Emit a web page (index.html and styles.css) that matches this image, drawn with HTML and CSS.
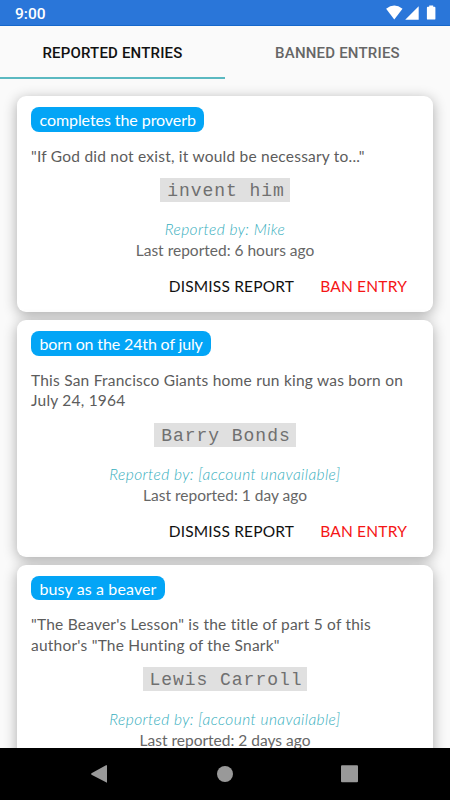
FILE: index.html
```
<!DOCTYPE html>
<html lang="en">
<head>
<meta charset="utf-8">
<title>Reported entries</title>
<link rel="stylesheet" href="styles.css">
</head>
<body>
<div class="screen">
  <header class="status">
    <span class="time">9:00</span>
    <svg class="status-icons" width="52" height="16" viewBox="0 0 52 16" fill="#fff">
      <path d="M2.100 3.700Q10.300-2.500 18.500 3.700L10.300 14.500Z"/>
      <path d="M34.700 1.200V14.700H21.200Z"/>
      <path d="M45.200 .400h4v1.400h1.300q.9 0 .9.9v11q0 .9-.9.9h-6.700q-.9 0-.9-.9V2.700q0-.9.9-.9h1.400z"/>
    </svg>
  </header>
  <nav class="tabs">
    <div class="tab active">REPORTED ENTRIES</div>
    <div class="tab">BANNED ENTRIES</div>
  </nav>
  <main class="list">
    <article class="card">
      <div class="tag tag-proverb">completes the proverb</div>
      <p class="question">"If God did not exist, it would be necessary to..."</p>
      <div class="answer">invent him</div>
      <div class="reporter">Reported by: Mike</div>
      <div class="when">Last reported: 6 hours ago</div>
      <div class="actions"><span class="dismiss">DISMISS REPORT</span><span class="ban">BAN ENTRY</span></div>
    </article>
    <article class="card">
      <div class="tag tag-july">born on the 24th of july</div>
      <p class="question">This San Francisco Giants home run king was born on<br>July 24, 1964</p>
      <div class="answer">Barry Bonds</div>
      <div class="reporter">Reported by: [account unavailable]</div>
      <div class="when">Last reported: 1 day ago</div>
      <div class="actions"><span class="dismiss">DISMISS REPORT</span><span class="ban">BAN ENTRY</span></div>
    </article>
    <article class="card">
      <div class="tag tag-beaver">busy as a beaver</div>
      <p class="question">"The Beaver's Lesson" is the title of part 5 of this<br>author's "The Hunting of the Snark"</p>
      <div class="answer">Lewis Carroll</div>
      <div class="reporter">Reported by: [account unavailable]</div>
      <div class="when">Last reported: 2 days ago</div>
    </article>
  </main>
  <footer class="navbar">
    <svg width="450" height="52" viewBox="0 0 450 52" fill="#999">
      <path d="M107 17.200V34.800L91.500 26.700Q90.700 26 91.500 25.300L106 17.200Z"/>
      <circle cx="225" cy="26" r="8"/>
      <rect x="341" y="17.200" width="17" height="17" rx="1"/>
    </svg>
  </footer>
</div>
</body>
</html>
```
FILE: styles.css
```
* { box-sizing: border-box; }
body { margin: 0; background: #fafafa; font-family: Lato, sans-serif; font-variant-ligatures: none; }
.screen { width: 450px; height: 800px; display: flex; flex-direction: column; overflow: hidden; }
.status {
  height: 26px; flex: none; background: #2a76d9; border-bottom: 1px solid #1567cb;
  display: flex; justify-content: space-between; padding: 5px 15px 0 15px;
  color: #fff; font: 500 15.5px/18px Roboto, sans-serif;
}
.status-icons { margin-right: -1px; }
.tabs { height: 53px; flex: none; display: flex; }
.tab {
  flex: 1; display: flex; justify-content: center; align-items: center; padding-top: 3px;
  font: 500 15px/20px Roboto, sans-serif; letter-spacing: .2px; color: #666;
  border-bottom: 2px solid transparent;
}
.active { color: #111; letter-spacing: .18px; border-color: #5bb9c1; }
.list {
  flex: 1; min-height: 0; overflow: hidden; padding: 17px 17px 0;
  display: flex; flex-direction: column; gap: 8.4px;
}
.card {
  flex: none; background: #fff; border-radius: 9px; padding: 11px 14px 14.7px;
  display: flex; flex-direction: column; color: #5c5c5c;
  font-size: 15.5px; line-height: 20.8px;
  box-shadow: 0 3px 14px rgba(0, 0, 0, .32);
}
.tag {
  align-self: flex-start; height: 24.5px; padding: 0 8.5px; border-radius: 8px;
  background: #03a5f6; color: #fff; font-size: 16px; line-height: 25px; white-space: nowrap;
}
.tag-proverb { letter-spacing: -.07px; }
.tag-july { letter-spacing: -.14px; }
.tag-beaver { letter-spacing: .12px; }
.question { margin: 14.1px 0 11.4px; white-space: nowrap; letter-spacing: .22px; }
.answer {
  align-self: center; height: 24px; padding: 0 5px 0 7px; background: #e0e0e0; color: #707070;
  font: 18px/27px "Liberation Mono", monospace; letter-spacing: .95px;
}
.reporter {
  margin-top: 17.3px; text-align: center; color: #35aebd;
  font-style: italic; font-weight: 300; letter-spacing: .42px;
}
.when { text-align: center; color: #666; }
.actions { display: flex; justify-content: flex-end; gap: 26px; padding-right: 12px; margin-top: 15.5px; }
.dismiss { color: #111; letter-spacing: .18px; }
.ban { color: #f51515; letter-spacing: .2px; }
.navbar { height: 52px; flex: none; background: #000; }
.navbar svg { display: block; }
```
